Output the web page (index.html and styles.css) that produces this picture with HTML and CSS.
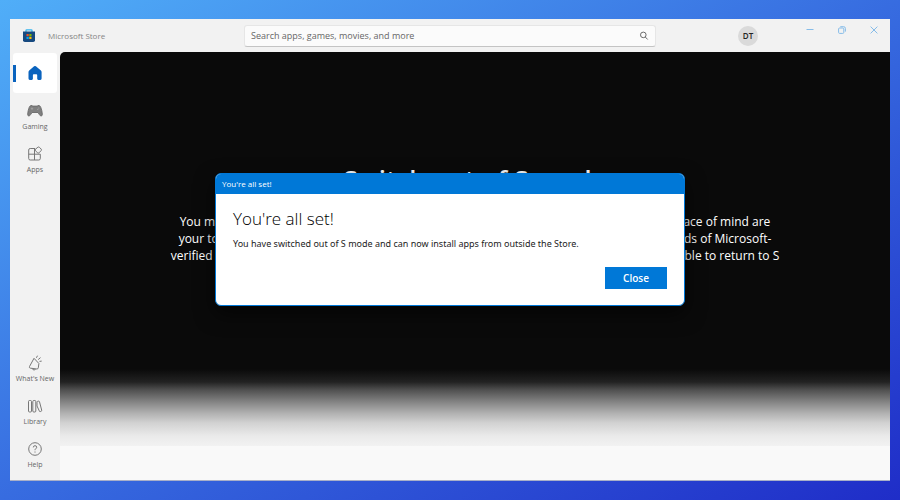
FILE: index.html
```html
<!DOCTYPE html>
<html lang="en">
<head>
	<meta charset="utf-8">
	<title>Microsoft Store</title>
	<link rel="stylesheet" href="styles.css">
</head>
<body>
	<div class="window">
		<header class="titlebar">
			<div class="brand">
				<svg class="logo" width="14" height="14" viewBox="0 0 14 14">
					<path d="M4 3V1.5Q4 .8 4.7 .8h4.6q.7 0 .7 .7V3" fill="none" stroke="#35b4ee" stroke-width="1.3"/>
					<path d="M1 2.5h12v8.7q0 1.8-1.8 1.8H2.8Q1 13 1 11.2z" fill="#174a80"/>
					<path d="M4.5 5h2.2v2.2H4.5z" fill="#f25022"/>
					<path d="M7.3 5h2.2v2.2H7.3z" fill="#7fba00"/>
					<path d="M4.5 7.8h2.2V10H4.5z" fill="#00a4ef"/>
					<path d="M7.3 7.8h2.2V10H7.3z" fill="#ffb900"/>
				</svg>
				<span>Microsoft Store</span>
			</div>
			<form class="search">
				<input type="search" placeholder="Search apps, games, movies, and more" aria-label="Search">
				<button type="button" aria-label="Search">
					<svg width="10" height="10" viewBox="0 0 10 10" fill="none" stroke="#6a6a6a" stroke-width="1">
						<circle cx="4.3" cy="3.9" r="2.8"/>
						<path d="M6.3 6l2.4 2.5"/>
					</svg>
				</button>
			</form>
			<button class="avatar" type="button">DT</button>
			<div class="wincontrols">
				<button type="button" aria-label="Minimize">
					<svg width="8" height="8" viewBox="0 0 8 8"><path d="M.5 3.5h7"/></svg>
				</button>
				<button type="button" aria-label="Restore">
					<svg width="8" height="8" viewBox="0 0 8 8"><rect x=".6" y="2" width="5.2" height="5.4" rx="1"/><path d="M2.3 .7h3.4q1.7 0 1.7 1.7v3.2"/></svg>
				</button>
				<button type="button" aria-label="Close window">
					<svg width="8" height="8" viewBox="0 0 8 8"><path d="M.6 .6l6.8 6.8M7.4 .6L.6 7.4"/></svg>
				</button>
			</div>
		</header>

		<div class="main">
			<nav class="sidebar">
				<a class="home" href="#" aria-label="Home">
					<svg width="16" height="16" viewBox="0 0 16 16">
						<path d="M7.1 1.3q.9-.7 1.8 0l5 4.2q.7.6.7 1.5v6.6q0 1.3-1.3 1.3h-2q-1.1 0-1.1-1.1V10q0-.8-.8-.8H6.7q-.8 0-.8.8v3.8q0 1.1-1.1 1.1h-2q-1.3 0-1.3-1.3V7q0-.9.7-1.5z" fill="#0a63be"/>
					</svg>
				</a>
				<a class="item" href="#">
					<svg width="16" height="16" viewBox="0 0 16 16">
						<path d="M3.9 2.6q1.2-.5 1.9.5h4.4q.7-1 1.9-.5 1.3.4 1.7 1.8 1.3 3.4 1.5 6.6.1 2-1.2 2-.9 0-1.7-1.4L11 9.5H5l-1.4 2.1Q2.8 13 1.9 13 .6 13 .7 11 .9 7.8 2.2 4.4 2.6 3 3.9 2.6z" fill="#808080" stroke="#6a6a6a" stroke-width=".9"/>
						<path d="M5 4.5v2.4M3.8 5.7h2.4" stroke="#aaa" stroke-width=".7"/>
						<circle cx="10.8" cy="6.3" r=".6" fill="#aaa"/>
						<circle cx="11.8" cy="5" r=".6" fill="#aaa"/>
					</svg>
					Gaming
				</a>
				<a class="item" href="#">
					<svg class="line" width="16" height="16" viewBox="0 0 16 16">
						<path d="M8.2 2.5H3.2Q1.7 2.5 1.7 4v8.5q0 1.5 1.5 1.5h8.6q1.5 0 1.5-1.5V8.2H1.7M7.5 2.5V14M8.5 3.2l2.4-2q.8-.5 1.5.1l1.7 1.7q.7.8.1 1.5l-2 2.2q-.8.7-1.5.1L8.5 4.9q-.7-.8 0-1.7z"/>
					</svg>
					Apps
				</a>
				<a class="item bottom" href="#">
					<svg class="line" width="16" height="16" viewBox="0 0 16 16">
						<path d="M7 3.3L2.5 11.5q-.6 1.3.7 1.6l6.6.9q1.3.1 1.5-1.2l.6-4.3zM5.2 13.6q.6 1.5 2 1.3 1 0 1.6-1M9.4 2.8L10.5.7M11.2 4.6l2.3-2M12.5 6.4l2.2-.3"/>
					</svg>
					What's New
				</a>
				<a class="item" href="#">
					<svg class="line" width="16" height="16" viewBox="0 0 16 16">
						<rect x="1.5" y="2.5" width="3" height="11.5" rx="1"/>
						<rect x="5.8" y="2.5" width="3" height="11.5" rx="1"/>
						<path d="M10 4.3q-.1-.8.7-1l.8-.2q.8-.1 1 .7l2.2 8.4q.2.9-.6 1.1l-.8.3q-.8.2-1-.7L10 8z"/>
					</svg>
					Library
				</a>
				<a class="item" href="#">
					<svg class="line" width="16" height="16" viewBox="0 0 16 16">
						<circle cx="8" cy="8" r="6.3"/>
						<path d="M6.3 6.4q0-1.7 1.7-1.7t1.7 1.5q0 .9-.9 1.5-.8.6-.8 1.5M8 10.5v1.1"/>
					</svg>
					Help
				</a>
			</nav>

			<main class="page">
				<section class="hero">
					<h1>Switch out of S mode</h1>
					<p>
						You may only install apps from the Microsoft Store in S mode. Its added security and its peace of mind are<br>
						your top benefits of staying in S mode, and you can still always choose from many thousands of Microsoft-<br>
						verified apps. If you decide to switch out of S mode on this PC now, you will never again be able to return to S<br>
						mode.
					</p>
				</section>
			</main>
		</div>

		<div class="dialog" role="dialog" aria-labelledby="dialog-title">
			<div class="dialog-bar">You're all set!</div>
			<div class="dialog-body">
				<h2 id="dialog-title">You're all set!</h2>
				<p>You have switched out of S mode and can now install apps from outside the Store.</p>
				<button class="close" type="button">Close</button>
			</div>
		</div>
	</div>
</body>
</html>
```

FILE: styles.css
```css
* {
	box-sizing: border-box;
}
body {
	margin: 0;
	min-height: 100vh;
	padding: 19px 10px;
	display: flex;
	font-family: "Open Sans", "Noto Sans", sans-serif;
	background: linear-gradient(to bottom right, #50aef8, #376ce0 50%, #1f2dc8);
}
h1, h2, p {
	margin: 0;
}
button {
	font-family: inherit;
	border: 0;
	padding: 0;
	background: none;
}
.window {
	position: relative;
	flex: 1;
	display: flex;
	flex-direction: column;
	background: #f2f2f2;
	border-bottom: 1px solid #a9b0c8;
}

/* title bar */
.titlebar {
	height: 33px;
	display: grid;
	grid-template-columns: 234px minmax(0, 412px) 1fr auto;
	align-items: center;
}
.brand {
	display: flex;
	align-items: center;
	gap: 12px;
	padding-left: 12px;
	font-size: 8px;
	color: #858585;
}
.search {
	display: flex;
	align-items: center;
	height: 22px;
	padding: 0 6px;
	background: #fbfbfb;
	border: 1px solid #e6e6e6;
	border-bottom-color: #c4c4c4;
	border-radius: 3px;
}
.search input {
	flex: 1;
	min-width: 0;
	padding: 0;
	border: 0;
	outline: 0;
	background: none;
	font: 9px "Open Sans", sans-serif;
}
.search input::placeholder {
	color: #666;
}
.search button {
	display: flex;
}
.avatar {
	width: 20px;
	height: 20px;
	margin-left: 82px;
	border-radius: 50%;
	background: #dadada;
	color: #222;
	font-size: 8px;
	font-weight: 600;
}
.wincontrols {
	display: flex;
	align-self: start;
	gap: 24px;
	padding: 7px 12px 0 0;
}
.wincontrols button {
	display: flex;
}
.wincontrols svg {
	fill: none;
	stroke: #86bce8;
}

/* sidebar */
.main {
	flex: 1;
	display: flex;
}
.sidebar {
	width: 50px;
	display: flex;
	flex-direction: column;
	padding: 1px 3px 6px;
	gap: 10px;
}
.home {
	display: flex;
	align-items: center;
	justify-content: center;
	height: 40px;
	border-radius: 3px;
	background: linear-gradient(#0a63be, #0a63be) 0 50% / 3px 17px no-repeat #fff;
}
.item {
	display: flex;
	flex-direction: column;
	align-items: center;
	gap: 3px;
	height: 33px;
	font-size: 7px;
	line-height: 10px;
	color: #666;
	text-decoration: none;
	white-space: nowrap;
}
.bottom {
	margin-top: auto;
}
.line {
	fill: none;
	stroke: #777;
}

/* page */
.page {
	flex: 1;
	background: #f9f9f9;
	border-radius: 5px 0 0 0;
	overflow: hidden;
}
.hero {
	height: 394px;
	padding-top: 111px;
	text-align: center;
	color: #fff;
	background: linear-gradient(#0a0a0a 317px, #222 330px, #505050 338px, #888 351px, #b0b0b0 361px, #d2d2d2 371px, #eaeaea 384px, #f2f2f2);
}
.hero h1 {
	font-size: 26px;
	line-height: 32px;
	font-weight: 600;
}
.hero p {
	margin-top: 18px;
	font-size: 12px;
	line-height: 17px;
	white-space: nowrap;
}

/* dialog */
.dialog {
	position: absolute;
	top: 154px;
	left: 0;
	right: 0;
	width: 470px;
	margin: 0 auto;
	border: 1px solid #0078d7;
	border-radius: 6px;
	overflow: hidden;
	background: #fff;
	box-shadow: 0 8px 20px rgba(0, 0, 0, .6);
}
.dialog-bar {
	padding: 0 6px;
	background: #0078d7;
	color: #fff;
	font-size: 8px;
	line-height: 20px;
}
.dialog-body {
	display: flex;
	flex-direction: column;
	padding: 12px 17px 16px;
	color: #222;
}
.dialog-body h2 {
	font-size: 17px;
	line-height: 26px;
	font-weight: 300;
	color: #000;
}
.dialog-body p {
	margin-top: 4px;
	font-family: "Noto Sans", sans-serif;
	font-size: 9px;
	line-height: 16px;
}
.close {
	align-self: flex-end;
	width: 62px;
	height: 22px;
	margin-top: 15px;
	background: #0078d7;
	color: #fff;
	font-size: 10px;
	font-weight: 600;
}
```
